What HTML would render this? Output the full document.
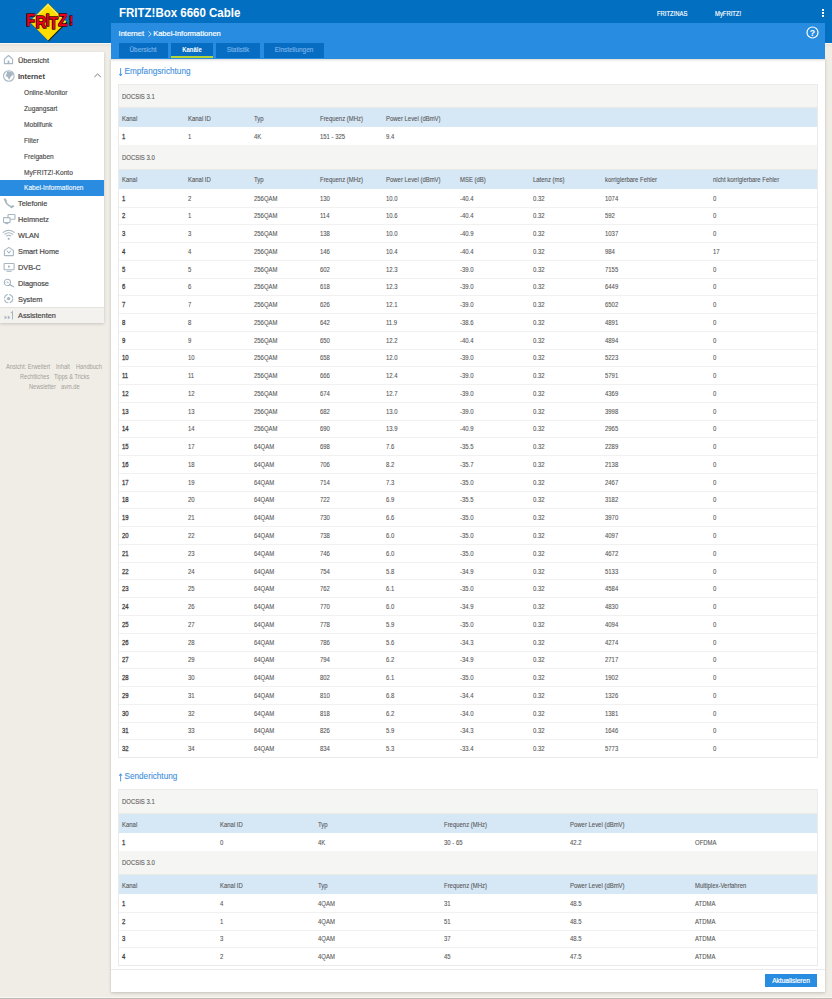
<!DOCTYPE html>
<html><head><meta charset="utf-8"><style>
html,body{margin:0;padding:0;}
body{width:832px;height:999px;overflow:hidden;background:#f0ede6;position:relative;font-family:"Liberation Sans",sans-serif;}
div,span{position:absolute;}
.tt{font-size:7px;line-height:8px;color:#555;-webkit-text-stroke:0.1px #666;white-space:pre;transform:translateY(-50%) scaleX(.85);transform-origin:0 50%;}
.tt.b{color:#3c3c3c;-webkit-text-stroke:0.28px #444;}
.sm{font-size:8px;line-height:10px;color:#444;-webkit-text-stroke:0.2px #4d4d4d;white-space:pre;transform:translateY(-50%) scaleX(.915);transform-origin:0 50%;}
.sm.b{font-weight:bold;color:#3c3c3c;-webkit-text-stroke:0;}
.ss{font-size:7.2px;line-height:10px;color:#474747;-webkit-text-stroke:0.15px #555;white-space:pre;transform:translateY(-50%) scaleX(.92);transform-origin:0 50%;}
.ic{width:12px;height:10px;}
.ic svg{display:block;}
.ft{font-size:6.3px;line-height:8px;color:#a29e97;white-space:pre;transform:translateY(-50%) scaleX(.9);transform-origin:0 50%;}
</style></head><body>
<!-- top bar -->
<div style="left:0;top:0;width:832px;height:43px;background:#036fc0"></div>
<!-- logo -->
<svg style="position:absolute;left:26px;top:1px" width="50" height="42" viewBox="0 0 50 42">
<path d="M22 2.2 L40.5 20.8 L22 39.4 L3.5 20.8 Z" fill="#1a1a10" transform="translate(0.8,0.8)"/>
<path d="M22 2.2 L40.5 20.8 L22 39.4 L3.5 20.8 Z" fill="#ffdc00"/>
<path d="M5 20.8 L22 3.7 L39 20.8" stroke="#fff7b0" stroke-width="0.9" fill="none"/>
<g font-family="Liberation Sans" font-weight="bold" font-size="16.5" fill="#e8001c" stroke="#3a0508" stroke-width="1.6" paint-order="stroke" stroke-linejoin="round">
<text x="0" y="25.5" transform="scale(0.9,1)">F</text>
<text x="10.5" y="27.5" transform="scale(0.9,1)">R</text>
<text x="21.8" y="25" transform="scale(0.9,1)">I</text>
<text x="25.5" y="27.8" transform="scale(0.9,1)">T</text>
<text x="35.8" y="25" transform="scale(0.9,1)">Z</text>
<text x="45.3" y="24" font-size="13" transform="scale(0.95,1)">!</text>
</g>
</svg>
<span style="left:118.5px;top:13px;font-size:12.2px;line-height:16px;font-weight:bold;color:#fff;white-space:pre;transform:translateY(-50%) scaleX(.943);transform-origin:0 50%">FRITZ!Box 6660 Cable</span>
<span style="left:657.3px;top:13.5px;font-size:6.6px;line-height:8px;color:#fff;-webkit-text-stroke:0.15px #fff;white-space:pre;transform:translateY(-50%) scaleX(.89);transform-origin:0 50%">FRITZ!NAS</span>
<span style="left:714.5px;top:13.5px;font-size:6.6px;line-height:8px;color:#fff;-webkit-text-stroke:0.15px #fff;white-space:pre;transform:translateY(-50%) scaleX(.89);transform-origin:0 50%">MyFRITZ!</span>
<div style="left:822px;top:9.2px;width:2px;height:2px;background:#fff"></div>
<div style="left:822px;top:12px;width:2px;height:2px;background:#fff"></div>
<div style="left:822px;top:14.8px;width:2px;height:2px;background:#fff"></div>

<div style="left:0;top:43px;width:832px;height:1px;background:#faf6ee"></div>
<div style="left:0;top:44px;width:832px;height:4px;background:linear-gradient(#e6e3dc,#f0ede6)"></div>
<!-- sidebar -->
<div style="left:0;top:52px;width:104px;height:271px;background:#fff;box-shadow:0 1px 3px rgba(0,0,0,.18)"></div>
<div style="left:0;top:180px;width:104px;height:15.5px;background:#2a8ce0"></div>
<span class="ss" style="left:23.8px;top:188.3px;color:#fff;-webkit-text-stroke:0.1px #fff">Kabel-Informationen</span>
<div style="left:0;top:307px;width:104px;height:16px;background:#f4f2ee;border-top:1px solid #e4e2dc;box-sizing:border-box"></div>
<span class="sm" style="left:18.1px;top:316.3px">Assistenten</span>
<svg style="position:absolute;left:94px;top:73px" width="8" height="5" viewBox="0 0 8 5"><path d="M0.4 4 L3.6 1 L6.8 4" stroke="#666" fill="none" stroke-width="0.9"/></svg>
<span class="sm" style="left:18.10px;top:60.80px">Übersicht</span>
<span class="sm b" style="left:18.10px;top:76.90px">Internet</span>
<span class="ss" style="left:23.80px;top:92.80px">Online-Monitor</span>
<span class="ss" style="left:23.80px;top:108.80px">Zugangsart</span>
<span class="ss" style="left:23.80px;top:124.80px">Mobilfunk</span>
<span class="ss" style="left:23.80px;top:140.80px">Filter</span>
<span class="ss" style="left:23.80px;top:156.80px">Freigaben</span>
<span class="ss" style="left:23.80px;top:172.80px">MyFRITZ!-Konto</span>
<span class="sm" style="left:18.10px;top:204.30px">Telefonie</span>
<span class="sm" style="left:18.10px;top:220.30px">Heimnetz</span>
<span class="sm" style="left:18.10px;top:236.30px">WLAN</span>
<span class="sm" style="left:18.10px;top:252.20px">Smart Home</span>
<span class="sm" style="left:18.10px;top:268.10px">DVB-C</span>
<span class="sm" style="left:18.10px;top:284.00px">Diagnose</span>
<span class="sm" style="left:18.10px;top:299.90px">System</span>
<svg style="position:absolute;left:3px;top:54px" width="11" height="11" viewBox="0 0 11 11"><path d="M1.4 5.2 L5.5 1.5 L9.6 5.2 V9.6 H1.4 Z" stroke="#a6b6c2" fill="none" stroke-width="1.1" stroke-linejoin="round" stroke-linecap="round"/><rect x="4.6" y="6.6" width="1.8" height="3.2" fill="#a6b6c2"/></svg>
<svg style="position:absolute;left:2px;top:69px" width="14" height="14" viewBox="0 0 14 14"><circle cx="6.8" cy="7" r="5.3" stroke="#a6b6c2" fill="none" stroke-width="1.1" stroke-linejoin="round" stroke-linecap="round"/><path d="M5 2.6 C6.5 2.2 8.6 2.4 10.4 3.6 C11.4 5 11 6.2 9.8 6.8 C8.8 7.2 8.4 8.4 7.8 10 C7.2 11 6.6 10.6 6.4 9.6 C6.2 8.6 5.4 8 4.4 7.6 C3.6 7.2 3.6 6 4.4 5.4 C5.2 4.8 4.6 3.6 5 2.6 Z" fill="#a6b6c2"/></svg>
<svg style="position:absolute;left:3px;top:198px" width="12" height="11" viewBox="0 0 12 11"><path d="M2.4 1.6 C2 4.5 5 8.2 9 8.8" stroke="#a6b6c2" stroke-width="1.5" fill="none" stroke-linecap="round"/><path d="M1.8 1.2 L3 3.2 M8.4 9.2 L10.2 8.2" stroke="#a6b6c2" stroke-width="1.9" stroke-linecap="round"/></svg>
<svg style="position:absolute;left:2px;top:213px" width="14" height="12" viewBox="0 0 14 12"><rect x="6" y="1.5" width="7" height="4.8" rx="0.8" stroke="#a6b6c2" fill="none" stroke-width="1.1" stroke-linejoin="round" stroke-linecap="round"/><rect x="1.5" y="4.6" width="6.6" height="5" rx="0.8" fill="#fff" stroke="#a6b6c2" stroke-width="1.1"/><path d="M3.4 10.6 H6.2" stroke="#a6b6c2" stroke-width="1.1"/></svg>
<svg style="position:absolute;left:2px;top:229px" width="14" height="12" viewBox="0 0 14 12"><path d="M1.2 3.4 Q6.7 -1 12.2 3.4 M2.9 5.2 Q6.7 2.2 10.5 5.2 M4.6 7 Q6.7 5.4 8.8 7" stroke="#a6b6c2" fill="none" stroke-width="1.1" stroke-linejoin="round" stroke-linecap="round"/><circle cx="6.7" cy="9.8" r="1.1" fill="#a6b6c2"/></svg>
<svg style="position:absolute;left:3px;top:246px" width="12" height="11" viewBox="0 0 12 11"><path d="M1.4 4.4 L5.9 1.4 L10.4 4.4 V9 Q10.4 9.6 9.8 9.6 H2 Q1.4 9.6 1.4 9 Z" stroke="#a6b6c2" fill="none" stroke-width="1.1" stroke-linejoin="round" stroke-linecap="round"/><path d="M4.2 5 L5.9 7 L7.6 5" stroke="#a6b6c2" fill="none" stroke-width="1.1" stroke-linejoin="round" stroke-linecap="round"/></svg>
<svg style="position:absolute;left:3px;top:262px" width="12" height="10" viewBox="0 0 12 10"><rect x="1.1" y="1.5" width="10" height="6.2" rx="0.6" stroke="#a6b6c2" fill="none" stroke-width="1.1" stroke-linejoin="round" stroke-linecap="round"/><path d="M5 3.2 L7.6 4.6 L5 6 Z" fill="#a6b6c2"/><path d="M3.6 9.3 H8.6" stroke="#a6b6c2" stroke-width="1"/></svg>
<svg style="position:absolute;left:3px;top:278px" width="12" height="10" viewBox="0 0 12 10"><circle cx="4.4" cy="4.4" r="3.1" stroke="#a6b6c2" fill="none" stroke-width="1.1" stroke-linejoin="round" stroke-linecap="round"/><path d="M6.6 6.6 L10.6 8.8" stroke="#a6b6c2" stroke-width="1.3" stroke-linecap="round"/><path d="M2.6 4.8 L3.8 3.6 L5 5.2 L6 4.2" stroke="#a6b6c2" stroke-width="0.8" fill="none"/></svg>
<svg style="position:absolute;left:3px;top:293px" width="12" height="12" viewBox="0 0 12 12"><circle cx="5.6" cy="5.6" r="4.2" stroke="#a6b6c2" stroke-width="1.1" fill="none" stroke-dasharray="5.2 1.4"/><circle cx="5.6" cy="5.6" r="1.7" fill="#a6b6c2"/></svg>
<svg style="position:absolute;left:4px;top:310px" width="10" height="10" viewBox="0 0 10 10"><path d="M0.6 5.6 L3.2 7.4 L0.6 9.3 Z M3.8 5.6 L6.4 7.4 L3.8 9.3 Z" fill="#a6b6c2"/><path d="M6.2 3.2 L9 0.6 V9.5 H8 V3 Z" fill="#a6b6c2"/></svg>
<!-- footer -->
<span class="ft" style="left:6.3px;top:366.9px">Ansicht: Erweitert</span>
<span class="ft" style="left:55.8px;top:366.9px">Inhalt</span>
<span class="ft" style="left:75.8px;top:366.9px">Handbuch</span>
<span class="ft" style="left:19.8px;top:376.9px">Rechtliches</span>
<span class="ft" style="left:54.2px;top:376.9px">Tipps &amp; Tricks</span>
<span class="ft" style="left:28.8px;top:387.1px">Newsletter</span>
<span class="ft" style="left:61.1px;top:387.1px">avm.de</span>

<!-- content -->
<div style="left:111px;top:58px;width:714px;height:933.5px;background:#fff;box-shadow:0 1px 3px rgba(0,0,0,.2)"></div>
<div style="left:111px;top:22.6px;width:714px;height:36.2px;background:#288ce0"></div>
<div style="left:111px;top:58.8px;width:714px;height:1px;background:#e8e4dc"></div>
<div style="left:111px;top:59.8px;width:714px;height:2px;background:linear-gradient(#efedea,#fff)"></div>
<span style="left:118.6px;top:34px;font-size:7.5px;line-height:10px;color:#fff;-webkit-text-stroke:0.2px #fff;white-space:pre;transform:translateY(-50%)">Internet</span>
<svg style="position:absolute;left:147.5px;top:30.5px" width="4" height="6" viewBox="0 0 4 6"><path d="M0.6 0.4 L3.2 3 L0.6 5.6" stroke="#fff" fill="none" stroke-width="0.8"/></svg>
<span style="left:153.2px;top:34px;font-size:7.5px;line-height:10px;color:#fff;-webkit-text-stroke:0.2px #fff;white-space:pre;transform:translateY(-50%)">Kabel-Informationen</span>
<svg style="position:absolute;left:806.2px;top:25.9px" width="13" height="13" viewBox="0 0 13 13"><circle cx="6.5" cy="6.5" r="5.5" stroke="#fff" stroke-width="1.2" fill="none"/><text x="6.5" y="9.6" text-anchor="middle" font-family="Liberation Sans" font-weight="bold" font-size="8.8" fill="#fff">?</text></svg>
<div style="left:119px;top:43.4px;width:48.7px;height:14.7px;background:#066dc2"></div>
<div style="left:171px;top:43.4px;width:41.8px;height:14.7px;background:#066dc2;border-bottom:2px solid #b5d334;box-sizing:border-box"></div>
<div style="left:216.1px;top:43.4px;width:43.9px;height:14.7px;background:#066dc2"></div>
<div style="left:263.5px;top:43.4px;width:60.2px;height:14.7px;background:#066dc2"></div>
<span style="left:143.35px;top:49.7px;font-size:7px;line-height:10px;color:#7ab3ea;-webkit-text-stroke:0.15px #7ab3ea;white-space:pre;transform:translate(-50%,-50%) scaleX(.92)">Übersicht</span>
<span style="left:191.9px;top:49.7px;font-size:7px;line-height:10px;color:#fff;font-weight:bold;white-space:pre;transform:translate(-50%,-50%) scaleX(.85)">Kanäle</span>
<span style="left:238px;top:49.7px;font-size:7px;line-height:10px;color:#7ab3ea;-webkit-text-stroke:0.15px #7ab3ea;white-space:pre;transform:translate(-50%,-50%) scaleX(.92)">Statistik</span>
<span style="left:293.6px;top:49.7px;font-size:7px;line-height:10px;color:#7ab3ea;-webkit-text-stroke:0.15px #7ab3ea;white-space:pre;transform:translate(-50%,-50%) scaleX(.92)">Einstellungen</span>

<svg style="position:absolute;left:118.5px;top:68px" width="4" height="9" viewBox="0 0 4 9"><path d="M1.6 0.2 V7.6 M0.2 5.8 L1.6 7.9 L3 5.8" stroke="#3f8fdc" stroke-width="0.9" fill="none"/></svg>
<span style="left:124.5px;top:71.6px;font-size:8.2px;line-height:10px;color:#3f8fdc;-webkit-text-stroke:0.1px #3f8fdc;white-space:pre;transform:translateY(-50%)">Empfangsrichtung</span>
<svg style="position:absolute;left:118.5px;top:772.8px" width="4" height="9" viewBox="0 0 4 9"><path d="M1.6 0.8 V8.4 M0.2 2.9 L1.6 0.8 L3 2.9" stroke="#3f8fdc" stroke-width="0.9" fill="none"/></svg>
<span style="left:124.5px;top:776.5px;font-size:8.2px;line-height:10px;color:#3f8fdc;-webkit-text-stroke:0.1px #3f8fdc;white-space:pre;transform:translateY(-50%)">Senderichtung</span>
<div style="left:118.20px;top:84.00px;width:699.40px;height:24.40px;background:#f5f5f3;border-bottom:1px solid #ebe9e4;box-sizing:border-box"></div>
<span class="tt" style="left:122.00px;top:96.80px;">DOCSIS 3.1</span>
<div style="left:118.20px;top:108.40px;width:699.40px;height:19.10px;background:#d6e7f5"></div>
<span class="tt" style="left:122.00px;top:119.15px;">Kanal</span>
<span class="tt" style="left:188.00px;top:119.15px;">Kanal ID</span>
<span class="tt" style="left:254.00px;top:119.15px;">Typ</span>
<span class="tt" style="left:320.00px;top:119.15px;">Frequenz (MHz)</span>
<span class="tt" style="left:386.00px;top:119.15px;">Power Level (dBmV)</span>
<span class="tt b" style="left:122.00px;top:137.28px;">1</span>
<span class="tt" style="left:188.00px;top:137.28px;">1</span>
<span class="tt" style="left:254.00px;top:137.28px;">4K</span>
<span class="tt" style="left:320.00px;top:137.28px;">151 - 325</span>
<span class="tt" style="left:386.00px;top:137.28px;">9.4</span>
<div style="left:118.20px;top:145.26px;width:699.40px;height:1.00px;background:#f1f1f1"></div>
<div style="left:118.20px;top:145.26px;width:699.40px;height:24.40px;background:#f5f5f3;border-bottom:1px solid #ebe9e4;box-sizing:border-box"></div>
<span class="tt" style="left:122.00px;top:158.06px;">DOCSIS 3.0</span>
<div style="left:118.20px;top:169.66px;width:699.40px;height:19.10px;background:#d6e7f5"></div>
<span class="tt" style="left:122.00px;top:180.41px;">Kanal</span>
<span class="tt" style="left:188.00px;top:180.41px;">Kanal ID</span>
<span class="tt" style="left:254.00px;top:180.41px;">Typ</span>
<span class="tt" style="left:320.00px;top:180.41px;">Frequenz (MHz)</span>
<span class="tt" style="left:386.00px;top:180.41px;">Power Level (dBmV)</span>
<span class="tt" style="left:459.50px;top:180.41px;">MSE (dB)</span>
<span class="tt" style="left:533.00px;top:180.41px;">Latenz (ms)</span>
<span class="tt" style="left:605.00px;top:180.41px;">korrigierbare Fehler</span>
<span class="tt" style="left:713.30px;top:180.41px;">nicht korrigierbare Fehler</span>
<span class="tt b" style="left:122.00px;top:198.54px;">1</span>
<span class="tt" style="left:188.00px;top:198.54px;">2</span>
<span class="tt" style="left:254.00px;top:198.54px;">256QAM</span>
<span class="tt" style="left:320.00px;top:198.54px;">130</span>
<span class="tt" style="left:386.00px;top:198.54px;">10.0</span>
<span class="tt" style="left:459.50px;top:198.54px;">-40.4</span>
<span class="tt" style="left:533.00px;top:198.54px;">0.32</span>
<span class="tt" style="left:605.00px;top:198.54px;">1074</span>
<span class="tt" style="left:713.30px;top:198.54px;">0</span>
<div style="left:118.20px;top:206.52px;width:699.40px;height:1.00px;background:#f1f1f1"></div>
<span class="tt b" style="left:122.00px;top:216.30px;">2</span>
<span class="tt" style="left:188.00px;top:216.30px;">1</span>
<span class="tt" style="left:254.00px;top:216.30px;">256QAM</span>
<span class="tt" style="left:320.00px;top:216.30px;">114</span>
<span class="tt" style="left:386.00px;top:216.30px;">10.6</span>
<span class="tt" style="left:459.50px;top:216.30px;">-40.4</span>
<span class="tt" style="left:533.00px;top:216.30px;">0.32</span>
<span class="tt" style="left:605.00px;top:216.30px;">592</span>
<span class="tt" style="left:713.30px;top:216.30px;">0</span>
<div style="left:118.20px;top:224.28px;width:699.40px;height:1.00px;background:#f1f1f1"></div>
<span class="tt b" style="left:122.00px;top:234.06px;">3</span>
<span class="tt" style="left:188.00px;top:234.06px;">3</span>
<span class="tt" style="left:254.00px;top:234.06px;">256QAM</span>
<span class="tt" style="left:320.00px;top:234.06px;">138</span>
<span class="tt" style="left:386.00px;top:234.06px;">10.0</span>
<span class="tt" style="left:459.50px;top:234.06px;">-40.9</span>
<span class="tt" style="left:533.00px;top:234.06px;">0.32</span>
<span class="tt" style="left:605.00px;top:234.06px;">1037</span>
<span class="tt" style="left:713.30px;top:234.06px;">0</span>
<div style="left:118.20px;top:242.04px;width:699.40px;height:1.00px;background:#f1f1f1"></div>
<span class="tt b" style="left:122.00px;top:251.82px;">4</span>
<span class="tt" style="left:188.00px;top:251.82px;">4</span>
<span class="tt" style="left:254.00px;top:251.82px;">256QAM</span>
<span class="tt" style="left:320.00px;top:251.82px;">146</span>
<span class="tt" style="left:386.00px;top:251.82px;">10.4</span>
<span class="tt" style="left:459.50px;top:251.82px;">-40.4</span>
<span class="tt" style="left:533.00px;top:251.82px;">0.32</span>
<span class="tt" style="left:605.00px;top:251.82px;">984</span>
<span class="tt" style="left:713.30px;top:251.82px;">17</span>
<div style="left:118.20px;top:259.80px;width:699.40px;height:1.00px;background:#f1f1f1"></div>
<span class="tt b" style="left:122.00px;top:269.58px;">5</span>
<span class="tt" style="left:188.00px;top:269.58px;">5</span>
<span class="tt" style="left:254.00px;top:269.58px;">256QAM</span>
<span class="tt" style="left:320.00px;top:269.58px;">602</span>
<span class="tt" style="left:386.00px;top:269.58px;">12.3</span>
<span class="tt" style="left:459.50px;top:269.58px;">-39.0</span>
<span class="tt" style="left:533.00px;top:269.58px;">0.32</span>
<span class="tt" style="left:605.00px;top:269.58px;">7155</span>
<span class="tt" style="left:713.30px;top:269.58px;">0</span>
<div style="left:118.20px;top:277.56px;width:699.40px;height:1.00px;background:#f1f1f1"></div>
<span class="tt b" style="left:122.00px;top:287.34px;">6</span>
<span class="tt" style="left:188.00px;top:287.34px;">6</span>
<span class="tt" style="left:254.00px;top:287.34px;">256QAM</span>
<span class="tt" style="left:320.00px;top:287.34px;">618</span>
<span class="tt" style="left:386.00px;top:287.34px;">12.3</span>
<span class="tt" style="left:459.50px;top:287.34px;">-39.0</span>
<span class="tt" style="left:533.00px;top:287.34px;">0.32</span>
<span class="tt" style="left:605.00px;top:287.34px;">6449</span>
<span class="tt" style="left:713.30px;top:287.34px;">0</span>
<div style="left:118.20px;top:295.32px;width:699.40px;height:1.00px;background:#f1f1f1"></div>
<span class="tt b" style="left:122.00px;top:305.10px;">7</span>
<span class="tt" style="left:188.00px;top:305.10px;">7</span>
<span class="tt" style="left:254.00px;top:305.10px;">256QAM</span>
<span class="tt" style="left:320.00px;top:305.10px;">626</span>
<span class="tt" style="left:386.00px;top:305.10px;">12.1</span>
<span class="tt" style="left:459.50px;top:305.10px;">-39.0</span>
<span class="tt" style="left:533.00px;top:305.10px;">0.32</span>
<span class="tt" style="left:605.00px;top:305.10px;">6502</span>
<span class="tt" style="left:713.30px;top:305.10px;">0</span>
<div style="left:118.20px;top:313.08px;width:699.40px;height:1.00px;background:#f1f1f1"></div>
<span class="tt b" style="left:122.00px;top:322.86px;">8</span>
<span class="tt" style="left:188.00px;top:322.86px;">8</span>
<span class="tt" style="left:254.00px;top:322.86px;">256QAM</span>
<span class="tt" style="left:320.00px;top:322.86px;">642</span>
<span class="tt" style="left:386.00px;top:322.86px;">11.9</span>
<span class="tt" style="left:459.50px;top:322.86px;">-38.6</span>
<span class="tt" style="left:533.00px;top:322.86px;">0.32</span>
<span class="tt" style="left:605.00px;top:322.86px;">4891</span>
<span class="tt" style="left:713.30px;top:322.86px;">0</span>
<div style="left:118.20px;top:330.84px;width:699.40px;height:1.00px;background:#f1f1f1"></div>
<span class="tt b" style="left:122.00px;top:340.62px;">9</span>
<span class="tt" style="left:188.00px;top:340.62px;">9</span>
<span class="tt" style="left:254.00px;top:340.62px;">256QAM</span>
<span class="tt" style="left:320.00px;top:340.62px;">650</span>
<span class="tt" style="left:386.00px;top:340.62px;">12.2</span>
<span class="tt" style="left:459.50px;top:340.62px;">-40.4</span>
<span class="tt" style="left:533.00px;top:340.62px;">0.32</span>
<span class="tt" style="left:605.00px;top:340.62px;">4894</span>
<span class="tt" style="left:713.30px;top:340.62px;">0</span>
<div style="left:118.20px;top:348.60px;width:699.40px;height:1.00px;background:#f1f1f1"></div>
<span class="tt b" style="left:122.00px;top:358.38px;">10</span>
<span class="tt" style="left:188.00px;top:358.38px;">10</span>
<span class="tt" style="left:254.00px;top:358.38px;">256QAM</span>
<span class="tt" style="left:320.00px;top:358.38px;">658</span>
<span class="tt" style="left:386.00px;top:358.38px;">12.0</span>
<span class="tt" style="left:459.50px;top:358.38px;">-39.0</span>
<span class="tt" style="left:533.00px;top:358.38px;">0.32</span>
<span class="tt" style="left:605.00px;top:358.38px;">5223</span>
<span class="tt" style="left:713.30px;top:358.38px;">0</span>
<div style="left:118.20px;top:366.36px;width:699.40px;height:1.00px;background:#f1f1f1"></div>
<span class="tt b" style="left:122.00px;top:376.14px;">11</span>
<span class="tt" style="left:188.00px;top:376.14px;">11</span>
<span class="tt" style="left:254.00px;top:376.14px;">256QAM</span>
<span class="tt" style="left:320.00px;top:376.14px;">666</span>
<span class="tt" style="left:386.00px;top:376.14px;">12.4</span>
<span class="tt" style="left:459.50px;top:376.14px;">-39.0</span>
<span class="tt" style="left:533.00px;top:376.14px;">0.32</span>
<span class="tt" style="left:605.00px;top:376.14px;">5791</span>
<span class="tt" style="left:713.30px;top:376.14px;">0</span>
<div style="left:118.20px;top:384.12px;width:699.40px;height:1.00px;background:#f1f1f1"></div>
<span class="tt b" style="left:122.00px;top:393.90px;">12</span>
<span class="tt" style="left:188.00px;top:393.90px;">12</span>
<span class="tt" style="left:254.00px;top:393.90px;">256QAM</span>
<span class="tt" style="left:320.00px;top:393.90px;">674</span>
<span class="tt" style="left:386.00px;top:393.90px;">12.7</span>
<span class="tt" style="left:459.50px;top:393.90px;">-39.0</span>
<span class="tt" style="left:533.00px;top:393.90px;">0.32</span>
<span class="tt" style="left:605.00px;top:393.90px;">4369</span>
<span class="tt" style="left:713.30px;top:393.90px;">0</span>
<div style="left:118.20px;top:401.88px;width:699.40px;height:1.00px;background:#f1f1f1"></div>
<span class="tt b" style="left:122.00px;top:411.66px;">13</span>
<span class="tt" style="left:188.00px;top:411.66px;">13</span>
<span class="tt" style="left:254.00px;top:411.66px;">256QAM</span>
<span class="tt" style="left:320.00px;top:411.66px;">682</span>
<span class="tt" style="left:386.00px;top:411.66px;">13.0</span>
<span class="tt" style="left:459.50px;top:411.66px;">-39.0</span>
<span class="tt" style="left:533.00px;top:411.66px;">0.32</span>
<span class="tt" style="left:605.00px;top:411.66px;">3998</span>
<span class="tt" style="left:713.30px;top:411.66px;">0</span>
<div style="left:118.20px;top:419.64px;width:699.40px;height:1.00px;background:#f1f1f1"></div>
<span class="tt b" style="left:122.00px;top:429.42px;">14</span>
<span class="tt" style="left:188.00px;top:429.42px;">14</span>
<span class="tt" style="left:254.00px;top:429.42px;">256QAM</span>
<span class="tt" style="left:320.00px;top:429.42px;">690</span>
<span class="tt" style="left:386.00px;top:429.42px;">13.9</span>
<span class="tt" style="left:459.50px;top:429.42px;">-40.9</span>
<span class="tt" style="left:533.00px;top:429.42px;">0.32</span>
<span class="tt" style="left:605.00px;top:429.42px;">2965</span>
<span class="tt" style="left:713.30px;top:429.42px;">0</span>
<div style="left:118.20px;top:437.40px;width:699.40px;height:1.00px;background:#f1f1f1"></div>
<span class="tt b" style="left:122.00px;top:447.18px;">15</span>
<span class="tt" style="left:188.00px;top:447.18px;">17</span>
<span class="tt" style="left:254.00px;top:447.18px;">64QAM</span>
<span class="tt" style="left:320.00px;top:447.18px;">698</span>
<span class="tt" style="left:386.00px;top:447.18px;">7.6</span>
<span class="tt" style="left:459.50px;top:447.18px;">-35.5</span>
<span class="tt" style="left:533.00px;top:447.18px;">0.32</span>
<span class="tt" style="left:605.00px;top:447.18px;">2289</span>
<span class="tt" style="left:713.30px;top:447.18px;">0</span>
<div style="left:118.20px;top:455.16px;width:699.40px;height:1.00px;background:#f1f1f1"></div>
<span class="tt b" style="left:122.00px;top:464.94px;">16</span>
<span class="tt" style="left:188.00px;top:464.94px;">18</span>
<span class="tt" style="left:254.00px;top:464.94px;">64QAM</span>
<span class="tt" style="left:320.00px;top:464.94px;">706</span>
<span class="tt" style="left:386.00px;top:464.94px;">8.2</span>
<span class="tt" style="left:459.50px;top:464.94px;">-35.7</span>
<span class="tt" style="left:533.00px;top:464.94px;">0.32</span>
<span class="tt" style="left:605.00px;top:464.94px;">2138</span>
<span class="tt" style="left:713.30px;top:464.94px;">0</span>
<div style="left:118.20px;top:472.92px;width:699.40px;height:1.00px;background:#f1f1f1"></div>
<span class="tt b" style="left:122.00px;top:482.70px;">17</span>
<span class="tt" style="left:188.00px;top:482.70px;">19</span>
<span class="tt" style="left:254.00px;top:482.70px;">64QAM</span>
<span class="tt" style="left:320.00px;top:482.70px;">714</span>
<span class="tt" style="left:386.00px;top:482.70px;">7.3</span>
<span class="tt" style="left:459.50px;top:482.70px;">-35.0</span>
<span class="tt" style="left:533.00px;top:482.70px;">0.32</span>
<span class="tt" style="left:605.00px;top:482.70px;">2467</span>
<span class="tt" style="left:713.30px;top:482.70px;">0</span>
<div style="left:118.20px;top:490.68px;width:699.40px;height:1.00px;background:#f1f1f1"></div>
<span class="tt b" style="left:122.00px;top:500.46px;">18</span>
<span class="tt" style="left:188.00px;top:500.46px;">20</span>
<span class="tt" style="left:254.00px;top:500.46px;">64QAM</span>
<span class="tt" style="left:320.00px;top:500.46px;">722</span>
<span class="tt" style="left:386.00px;top:500.46px;">6.9</span>
<span class="tt" style="left:459.50px;top:500.46px;">-35.5</span>
<span class="tt" style="left:533.00px;top:500.46px;">0.32</span>
<span class="tt" style="left:605.00px;top:500.46px;">3182</span>
<span class="tt" style="left:713.30px;top:500.46px;">0</span>
<div style="left:118.20px;top:508.44px;width:699.40px;height:1.00px;background:#f1f1f1"></div>
<span class="tt b" style="left:122.00px;top:518.22px;">19</span>
<span class="tt" style="left:188.00px;top:518.22px;">21</span>
<span class="tt" style="left:254.00px;top:518.22px;">64QAM</span>
<span class="tt" style="left:320.00px;top:518.22px;">730</span>
<span class="tt" style="left:386.00px;top:518.22px;">6.6</span>
<span class="tt" style="left:459.50px;top:518.22px;">-35.0</span>
<span class="tt" style="left:533.00px;top:518.22px;">0.32</span>
<span class="tt" style="left:605.00px;top:518.22px;">3970</span>
<span class="tt" style="left:713.30px;top:518.22px;">0</span>
<div style="left:118.20px;top:526.20px;width:699.40px;height:1.00px;background:#f1f1f1"></div>
<span class="tt b" style="left:122.00px;top:535.98px;">20</span>
<span class="tt" style="left:188.00px;top:535.98px;">22</span>
<span class="tt" style="left:254.00px;top:535.98px;">64QAM</span>
<span class="tt" style="left:320.00px;top:535.98px;">738</span>
<span class="tt" style="left:386.00px;top:535.98px;">6.0</span>
<span class="tt" style="left:459.50px;top:535.98px;">-35.0</span>
<span class="tt" style="left:533.00px;top:535.98px;">0.32</span>
<span class="tt" style="left:605.00px;top:535.98px;">4097</span>
<span class="tt" style="left:713.30px;top:535.98px;">0</span>
<div style="left:118.20px;top:543.96px;width:699.40px;height:1.00px;background:#f1f1f1"></div>
<span class="tt b" style="left:122.00px;top:553.74px;">21</span>
<span class="tt" style="left:188.00px;top:553.74px;">23</span>
<span class="tt" style="left:254.00px;top:553.74px;">64QAM</span>
<span class="tt" style="left:320.00px;top:553.74px;">746</span>
<span class="tt" style="left:386.00px;top:553.74px;">6.0</span>
<span class="tt" style="left:459.50px;top:553.74px;">-35.0</span>
<span class="tt" style="left:533.00px;top:553.74px;">0.32</span>
<span class="tt" style="left:605.00px;top:553.74px;">4672</span>
<span class="tt" style="left:713.30px;top:553.74px;">0</span>
<div style="left:118.20px;top:561.72px;width:699.40px;height:1.00px;background:#f1f1f1"></div>
<span class="tt b" style="left:122.00px;top:571.50px;">22</span>
<span class="tt" style="left:188.00px;top:571.50px;">24</span>
<span class="tt" style="left:254.00px;top:571.50px;">64QAM</span>
<span class="tt" style="left:320.00px;top:571.50px;">754</span>
<span class="tt" style="left:386.00px;top:571.50px;">5.8</span>
<span class="tt" style="left:459.50px;top:571.50px;">-34.9</span>
<span class="tt" style="left:533.00px;top:571.50px;">0.32</span>
<span class="tt" style="left:605.00px;top:571.50px;">5133</span>
<span class="tt" style="left:713.30px;top:571.50px;">0</span>
<div style="left:118.20px;top:579.48px;width:699.40px;height:1.00px;background:#f1f1f1"></div>
<span class="tt b" style="left:122.00px;top:589.26px;">23</span>
<span class="tt" style="left:188.00px;top:589.26px;">25</span>
<span class="tt" style="left:254.00px;top:589.26px;">64QAM</span>
<span class="tt" style="left:320.00px;top:589.26px;">762</span>
<span class="tt" style="left:386.00px;top:589.26px;">6.1</span>
<span class="tt" style="left:459.50px;top:589.26px;">-35.0</span>
<span class="tt" style="left:533.00px;top:589.26px;">0.32</span>
<span class="tt" style="left:605.00px;top:589.26px;">4584</span>
<span class="tt" style="left:713.30px;top:589.26px;">0</span>
<div style="left:118.20px;top:597.24px;width:699.40px;height:1.00px;background:#f1f1f1"></div>
<span class="tt b" style="left:122.00px;top:607.02px;">24</span>
<span class="tt" style="left:188.00px;top:607.02px;">26</span>
<span class="tt" style="left:254.00px;top:607.02px;">64QAM</span>
<span class="tt" style="left:320.00px;top:607.02px;">770</span>
<span class="tt" style="left:386.00px;top:607.02px;">6.0</span>
<span class="tt" style="left:459.50px;top:607.02px;">-34.9</span>
<span class="tt" style="left:533.00px;top:607.02px;">0.32</span>
<span class="tt" style="left:605.00px;top:607.02px;">4830</span>
<span class="tt" style="left:713.30px;top:607.02px;">0</span>
<div style="left:118.20px;top:615.00px;width:699.40px;height:1.00px;background:#f1f1f1"></div>
<span class="tt b" style="left:122.00px;top:624.78px;">25</span>
<span class="tt" style="left:188.00px;top:624.78px;">27</span>
<span class="tt" style="left:254.00px;top:624.78px;">64QAM</span>
<span class="tt" style="left:320.00px;top:624.78px;">778</span>
<span class="tt" style="left:386.00px;top:624.78px;">5.9</span>
<span class="tt" style="left:459.50px;top:624.78px;">-35.0</span>
<span class="tt" style="left:533.00px;top:624.78px;">0.32</span>
<span class="tt" style="left:605.00px;top:624.78px;">4094</span>
<span class="tt" style="left:713.30px;top:624.78px;">0</span>
<div style="left:118.20px;top:632.76px;width:699.40px;height:1.00px;background:#f1f1f1"></div>
<span class="tt b" style="left:122.00px;top:642.54px;">26</span>
<span class="tt" style="left:188.00px;top:642.54px;">28</span>
<span class="tt" style="left:254.00px;top:642.54px;">64QAM</span>
<span class="tt" style="left:320.00px;top:642.54px;">786</span>
<span class="tt" style="left:386.00px;top:642.54px;">5.6</span>
<span class="tt" style="left:459.50px;top:642.54px;">-34.3</span>
<span class="tt" style="left:533.00px;top:642.54px;">0.32</span>
<span class="tt" style="left:605.00px;top:642.54px;">4274</span>
<span class="tt" style="left:713.30px;top:642.54px;">0</span>
<div style="left:118.20px;top:650.52px;width:699.40px;height:1.00px;background:#f1f1f1"></div>
<span class="tt b" style="left:122.00px;top:660.30px;">27</span>
<span class="tt" style="left:188.00px;top:660.30px;">29</span>
<span class="tt" style="left:254.00px;top:660.30px;">64QAM</span>
<span class="tt" style="left:320.00px;top:660.30px;">794</span>
<span class="tt" style="left:386.00px;top:660.30px;">6.2</span>
<span class="tt" style="left:459.50px;top:660.30px;">-34.9</span>
<span class="tt" style="left:533.00px;top:660.30px;">0.32</span>
<span class="tt" style="left:605.00px;top:660.30px;">2717</span>
<span class="tt" style="left:713.30px;top:660.30px;">0</span>
<div style="left:118.20px;top:668.28px;width:699.40px;height:1.00px;background:#f1f1f1"></div>
<span class="tt b" style="left:122.00px;top:678.06px;">28</span>
<span class="tt" style="left:188.00px;top:678.06px;">30</span>
<span class="tt" style="left:254.00px;top:678.06px;">64QAM</span>
<span class="tt" style="left:320.00px;top:678.06px;">802</span>
<span class="tt" style="left:386.00px;top:678.06px;">6.1</span>
<span class="tt" style="left:459.50px;top:678.06px;">-35.0</span>
<span class="tt" style="left:533.00px;top:678.06px;">0.32</span>
<span class="tt" style="left:605.00px;top:678.06px;">1902</span>
<span class="tt" style="left:713.30px;top:678.06px;">0</span>
<div style="left:118.20px;top:686.04px;width:699.40px;height:1.00px;background:#f1f1f1"></div>
<span class="tt b" style="left:122.00px;top:695.82px;">29</span>
<span class="tt" style="left:188.00px;top:695.82px;">31</span>
<span class="tt" style="left:254.00px;top:695.82px;">64QAM</span>
<span class="tt" style="left:320.00px;top:695.82px;">810</span>
<span class="tt" style="left:386.00px;top:695.82px;">6.8</span>
<span class="tt" style="left:459.50px;top:695.82px;">-34.4</span>
<span class="tt" style="left:533.00px;top:695.82px;">0.32</span>
<span class="tt" style="left:605.00px;top:695.82px;">1326</span>
<span class="tt" style="left:713.30px;top:695.82px;">0</span>
<div style="left:118.20px;top:703.80px;width:699.40px;height:1.00px;background:#f1f1f1"></div>
<span class="tt b" style="left:122.00px;top:713.58px;">30</span>
<span class="tt" style="left:188.00px;top:713.58px;">32</span>
<span class="tt" style="left:254.00px;top:713.58px;">64QAM</span>
<span class="tt" style="left:320.00px;top:713.58px;">818</span>
<span class="tt" style="left:386.00px;top:713.58px;">6.2</span>
<span class="tt" style="left:459.50px;top:713.58px;">-34.0</span>
<span class="tt" style="left:533.00px;top:713.58px;">0.32</span>
<span class="tt" style="left:605.00px;top:713.58px;">1381</span>
<span class="tt" style="left:713.30px;top:713.58px;">0</span>
<div style="left:118.20px;top:721.56px;width:699.40px;height:1.00px;background:#f1f1f1"></div>
<span class="tt b" style="left:122.00px;top:731.34px;">31</span>
<span class="tt" style="left:188.00px;top:731.34px;">33</span>
<span class="tt" style="left:254.00px;top:731.34px;">64QAM</span>
<span class="tt" style="left:320.00px;top:731.34px;">826</span>
<span class="tt" style="left:386.00px;top:731.34px;">5.9</span>
<span class="tt" style="left:459.50px;top:731.34px;">-34.3</span>
<span class="tt" style="left:533.00px;top:731.34px;">0.32</span>
<span class="tt" style="left:605.00px;top:731.34px;">1646</span>
<span class="tt" style="left:713.30px;top:731.34px;">0</span>
<div style="left:118.20px;top:739.32px;width:699.40px;height:1.00px;background:#f1f1f1"></div>
<span class="tt b" style="left:122.00px;top:749.10px;">32</span>
<span class="tt" style="left:188.00px;top:749.10px;">34</span>
<span class="tt" style="left:254.00px;top:749.10px;">64QAM</span>
<span class="tt" style="left:320.00px;top:749.10px;">834</span>
<span class="tt" style="left:386.00px;top:749.10px;">5.3</span>
<span class="tt" style="left:459.50px;top:749.10px;">-33.4</span>
<span class="tt" style="left:533.00px;top:749.10px;">0.32</span>
<span class="tt" style="left:605.00px;top:749.10px;">5773</span>
<span class="tt" style="left:713.30px;top:749.10px;">0</span>
<div style="left:118.20px;top:757.08px;width:699.40px;height:1.00px;background:#f1f1f1"></div>
<div style="left:118.20px;top:84.00px;width:699.40px;height:674.08px;border:1px solid #ebebe9;box-sizing:border-box;background:transparent"></div>
<div style="left:118.20px;top:789.40px;width:699.40px;height:24.40px;background:#f5f5f3;border-bottom:1px solid #ebe9e4;box-sizing:border-box"></div>
<span class="tt" style="left:122.00px;top:802.20px;">DOCSIS 3.1</span>
<div style="left:118.20px;top:813.80px;width:699.40px;height:19.10px;background:#d6e7f5"></div>
<span class="tt" style="left:122.00px;top:824.55px;">Kanal</span>
<span class="tt" style="left:220.00px;top:824.55px;">Kanal ID</span>
<span class="tt" style="left:318.00px;top:824.55px;">Typ</span>
<span class="tt" style="left:443.50px;top:824.55px;">Frequenz (MHz)</span>
<span class="tt" style="left:569.50px;top:824.55px;">Power Level (dBmV)</span>
<span class="tt" style="left:695.00px;top:824.55px;"></span>
<span class="tt b" style="left:122.00px;top:842.68px;">1</span>
<span class="tt" style="left:220.00px;top:842.68px;">0</span>
<span class="tt" style="left:318.00px;top:842.68px;">4K</span>
<span class="tt" style="left:443.50px;top:842.68px;">30 - 65</span>
<span class="tt" style="left:569.50px;top:842.68px;">42.2</span>
<span class="tt" style="left:695.00px;top:842.68px;">OFDMA</span>
<div style="left:118.20px;top:850.66px;width:699.40px;height:1.00px;background:#f1f1f1"></div>
<div style="left:118.20px;top:850.66px;width:699.40px;height:24.40px;background:#f5f5f3;border-bottom:1px solid #ebe9e4;box-sizing:border-box"></div>
<span class="tt" style="left:122.00px;top:863.46px;">DOCSIS 3.0</span>
<div style="left:118.20px;top:875.06px;width:699.40px;height:19.10px;background:#d6e7f5"></div>
<span class="tt" style="left:122.00px;top:885.81px;">Kanal</span>
<span class="tt" style="left:220.00px;top:885.81px;">Kanal ID</span>
<span class="tt" style="left:318.00px;top:885.81px;">Typ</span>
<span class="tt" style="left:443.50px;top:885.81px;">Frequenz (MHz)</span>
<span class="tt" style="left:569.50px;top:885.81px;">Power Level (dBmV)</span>
<span class="tt" style="left:695.00px;top:885.81px;">Multiplex-Verfahren</span>
<span class="tt b" style="left:122.00px;top:903.94px;">1</span>
<span class="tt" style="left:220.00px;top:903.94px;">4</span>
<span class="tt" style="left:318.00px;top:903.94px;">4QAM</span>
<span class="tt" style="left:443.50px;top:903.94px;">31</span>
<span class="tt" style="left:569.50px;top:903.94px;">48.5</span>
<span class="tt" style="left:695.00px;top:903.94px;">ATDMA</span>
<div style="left:118.20px;top:911.92px;width:699.40px;height:1.00px;background:#f1f1f1"></div>
<span class="tt b" style="left:122.00px;top:921.70px;">2</span>
<span class="tt" style="left:220.00px;top:921.70px;">1</span>
<span class="tt" style="left:318.00px;top:921.70px;">4QAM</span>
<span class="tt" style="left:443.50px;top:921.70px;">51</span>
<span class="tt" style="left:569.50px;top:921.70px;">48.5</span>
<span class="tt" style="left:695.00px;top:921.70px;">ATDMA</span>
<div style="left:118.20px;top:929.68px;width:699.40px;height:1.00px;background:#f1f1f1"></div>
<span class="tt b" style="left:122.00px;top:939.46px;">3</span>
<span class="tt" style="left:220.00px;top:939.46px;">3</span>
<span class="tt" style="left:318.00px;top:939.46px;">4QAM</span>
<span class="tt" style="left:443.50px;top:939.46px;">37</span>
<span class="tt" style="left:569.50px;top:939.46px;">48.5</span>
<span class="tt" style="left:695.00px;top:939.46px;">ATDMA</span>
<div style="left:118.20px;top:947.44px;width:699.40px;height:1.00px;background:#f1f1f1"></div>
<span class="tt b" style="left:122.00px;top:957.22px;">4</span>
<span class="tt" style="left:220.00px;top:957.22px;">2</span>
<span class="tt" style="left:318.00px;top:957.22px;">4QAM</span>
<span class="tt" style="left:443.50px;top:957.22px;">45</span>
<span class="tt" style="left:569.50px;top:957.22px;">47.5</span>
<span class="tt" style="left:695.00px;top:957.22px;">ATDMA</span>
<div style="left:118.20px;top:965.20px;width:699.40px;height:1.00px;background:#f1f1f1"></div>
<div style="left:118.20px;top:789.40px;width:699.40px;height:176.80px;border:1px solid #ebebe9;box-sizing:border-box;background:transparent"></div>
<div style="left:111px;top:969.3px;width:714px;height:1px;background:#ebebeb"></div>
<div style="left:765px;top:973.8px;width:51.8px;height:13.7px;background:#288ce0"></div>
<span style="left:790.6px;top:981px;font-size:7px;line-height:8px;color:#fff;-webkit-text-stroke:0.2px #fff;white-space:pre;transform:translate(-50%,-50%) scaleX(.94)">Aktualisieren</span>
<div style="left:0;top:997px;width:832px;height:1px;background:#f9f6f0"></div><div style="left:0;top:998px;width:832px;height:1px;background:#bcbab4"></div>
</body></html>
